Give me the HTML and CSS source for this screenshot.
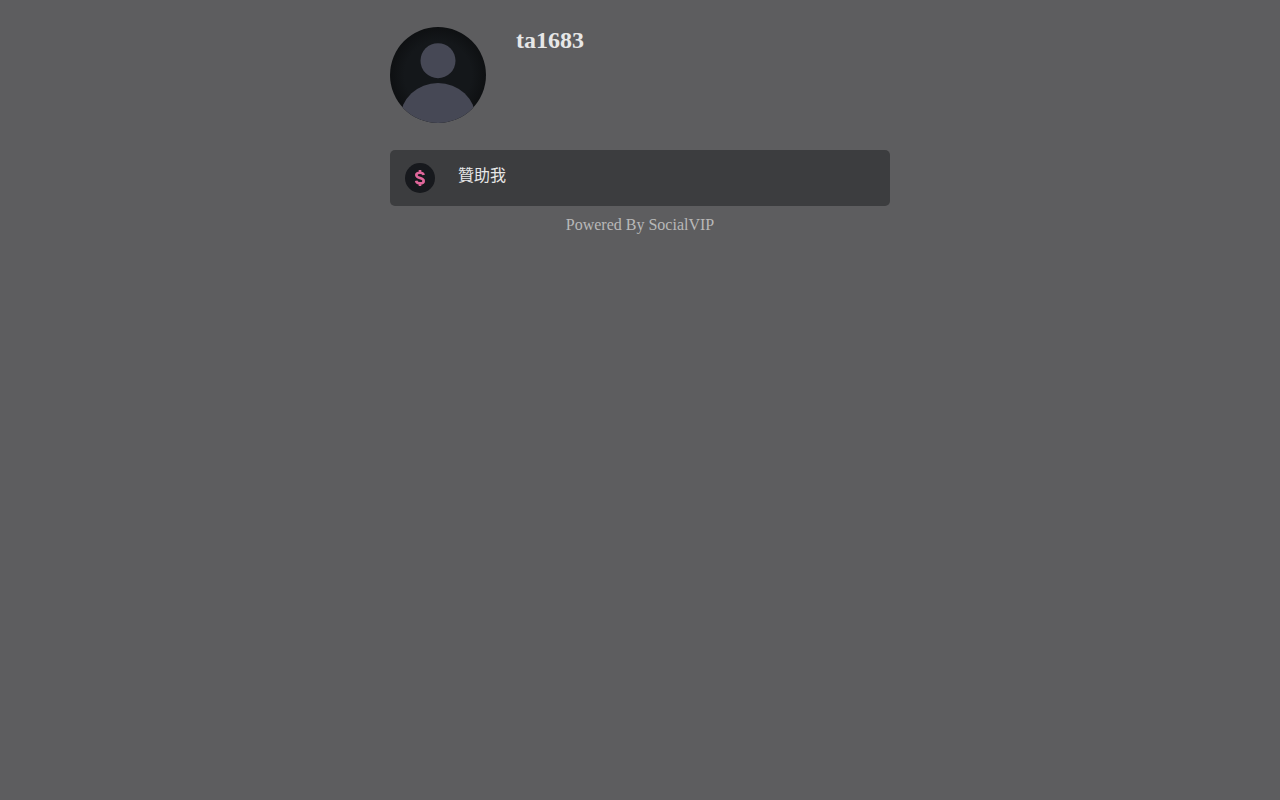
FILE: index.html
```
<!DOCTYPE html>
<html lang="zh-Hant">
<head>
<meta charset="utf-8">
<meta name="viewport" content="width=device-width, initial-scale=1">
<title>ta1683</title>
<link rel="stylesheet" href="styles.css">
</head>
<body>
<main class="page">
  <header class="profile">
    <svg class="avatar" viewBox="0 0 96 96" aria-hidden="true">
      <defs>
        <radialGradient id="shade"><stop offset="0.7" stop-color="#14171a"/><stop offset="1" stop-color="#0e1012"/></radialGradient>
        <clipPath id="round"><circle cx="48" cy="48" r="48"/></clipPath>
      </defs>
      <circle cx="48" cy="48" r="48" fill="url(#shade)"/>
      <g clip-path="url(#round)" fill="#464855">
        <circle cx="48" cy="33.7" r="17.5"/>
        <ellipse cx="48" cy="91" rx="37.5" ry="35"/>
      </g>
    </svg>
    <h1 class="name">ta1683</h1>
  </header>
  <a class="link" href="#sponsor">
    <svg class="coin" viewBox="0 0 30 30" aria-hidden="true">
      <circle cx="15" cy="15" r="15" fill="#17191d"/>
      <path d="M18.700 12C18.200 10.300 17 9.700 15 9.700c-2.300 0-3.700 0.900-3.700 2.400 0 3.800 7.400 2.100 7.400 5.800 0 1.600-1.400 2.500-3.700 2.500-2.300 0-3.500-0.900-3.900-2.700M15 7v3m0 10v3" fill="none" stroke="#e0669a" stroke-width="2.600"/>
    </svg>
    <span class="label">贊助我</span>
  </a>
  <footer class="footer">Powered By SocialVIP</footer>
</main>
</body>
</html>
```
FILE: styles.css
```
body {
  margin: 0;
  background: #5d5d5f;
  color: #e7e7e7;
  font-family: "Liberation Serif", "Noto Sans CJK TC", serif;
  font-size: 16px;
  line-height: 18px;
}
.page {
  max-width: 500px;
  margin: 0 auto;
  padding-top: 27px;
}
.profile {
  display: flex;
  gap: 30px;
  margin-bottom: 27px;
}
.avatar {
  width: 96px;
  height: 96px;
  flex: none;
}
.name {
  margin: 0;
  font-size: 24px;
  line-height: 27px;
}
.link {
  display: flex;
  gap: 23px;
  padding: 13px 15px;
  border-radius: 5px;
  background: #3c3d3f;
  color: inherit;
  text-decoration: none;
}
.coin {
  width: 30px;
  height: 30px;
  flex: none;
}
.label {
  font-family: "Noto Sans CJK TC", sans-serif;
  line-height: 22px;
}
.footer {
  margin-top: 10px;
  color: #b8b8b8;
  text-align: center;
}
```
